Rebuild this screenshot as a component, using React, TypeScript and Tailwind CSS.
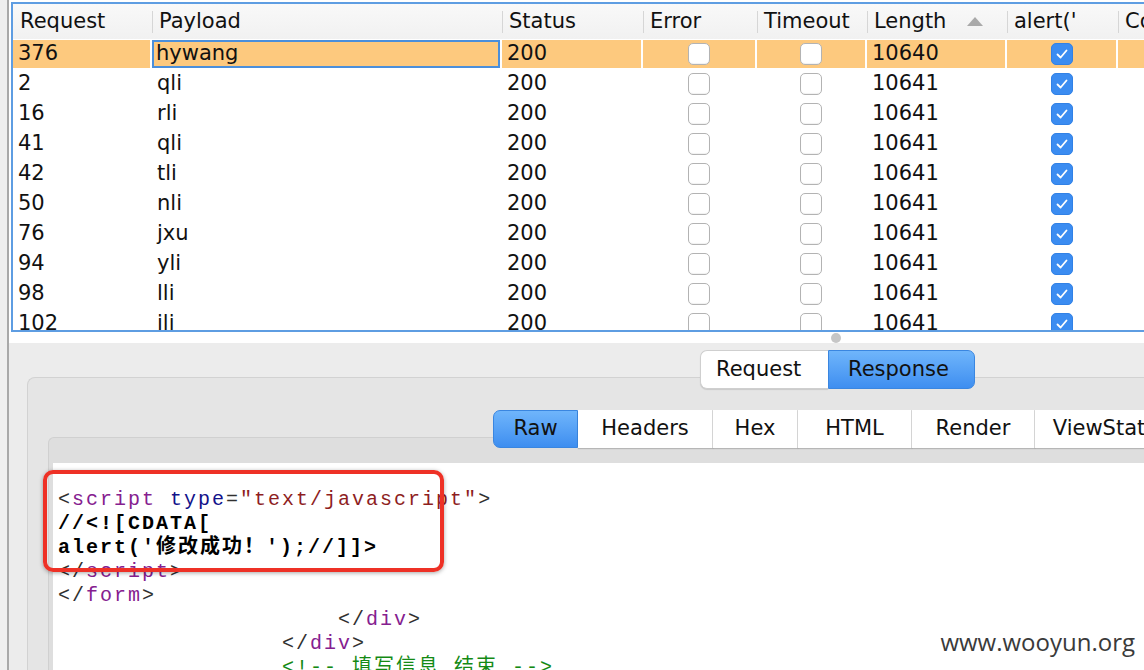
const cols = [
  { label: "Request", w: "w-[139px]" },
  { label: "Payload", w: "w-[350px]" },
  { label: "Status", w: "w-[141px]" },
  { label: "Error", w: "w-[114px]" },
  { label: "Timeout", w: "w-[110px]" },
  { label: "Length", w: "w-[140px]" },
  { label: "alert('", w: "w-[111px]" },
  { label: "Comment", w: "w-[120px]" },
];

const rows = [
  ["376", "hywang", "10640"],
  ["2", "qli", "10641"],
  ["16", "rli", "10641"],
  ["41", "qli", "10641"],
  ["42", "tli", "10641"],
  ["50", "nli", "10641"],
  ["76", "jxu", "10641"],
  ["94", "yli", "10641"],
  ["98", "lli", "10641"],
  ["102", "jli", "10641"],
];

const tabs = [
  { label: "Raw", w: "w-[85px]", active: true },
  { label: "Headers", w: "w-[135px]" },
  { label: "Hex", w: "w-[85px]" },
  { label: "HTML", w: "w-[114px]" },
  { label: "Render", w: "w-[123px]" },
  { label: "ViewState", w: "w-[142px]" },
];

const Check = ({ on }: { on?: boolean }) =>
  on ? (
    <div className="w-[22px] h-[22px] rounded-[5px] bg-[#3b8cf1] border border-[#3181e6] flex items-center justify-center">
      <svg width="14" height="14" viewBox="0 0 14 14">
        <path d="M2.5 7.5 L5.6 10.5 L11.5 3.5" fill="none" stroke="white" strokeWidth="1.8" strokeLinecap="round" strokeLinejoin="round" />
      </svg>
    </div>
  ) : (
    <div className="w-[22px] h-[22px] rounded-[5px] bg-white border border-[#b3b3b3] shadow-[inset_0_-1px_1px_rgba(0,0,0,0.06)]" />
  );

const Cell = ({ w, sel, children, center, focus }: any) => (
  <div className={`${w} h-full shrink-0 pr-[2px] py-[1px]`}>
    <div
      className={`h-full flex items-center ${center ? "justify-center" : focus ? "pl-[2px]" : "pl-[5px]"} ${
        sel ? "bg-[#fdc97e]" : ""
      } ${focus ? "border-2 border-[#4b8fdb]" : ""}`}
    >
      {children}
    </div>
  </div>
);

const P = ({ c }: { c: string }) => <span className="text-[#85208f]">{c}</span>;
const T = ({ c }: { c: string }) => <span className="text-[#303030]">{c}</span>;

const App = () => {
  return (
    <div className="relative w-[1144px] h-[670px] overflow-hidden bg-[#ececec] flex font-['DejaVu_Sans',sans-serif] text-[#111]">
      <div className="w-[7px] shrink-0 bg-[#efefef]" />
      <div className="w-[2px] shrink-0 bg-[#a9a9a9]" />

      <div className="flex-1 min-w-0 flex flex-col">
        {/* intruder results table */}
        <div className="bg-white pl-[2px] pt-[2px] pb-[11px]">
          <div className="h-[330px] border-2 border-r-0 border-[#5e9de2] overflow-hidden">
            <div className="h-[35px] flex bg-gradient-to-b from-[#f9f9f9] to-[#f1f1f1] text-[21px] whitespace-nowrap">
              {cols.map((c, i) => (
                <div key={c.label} className={`${c.w} shrink-0 h-full flex items-center relative pl-[7px] ${i === 5 ? "justify-between pr-[24px]" : ""}`}>
                  {i > 0 && <div className="absolute left-0 top-[7px] h-[22px] w-[1px] bg-[#d6d6d6]" />}
                  <span>{c.label}</span>
                  {i === 5 && (
                    <svg width="16" height="9" viewBox="0 0 16 9">
                      <polygon points="8,0 16,9 0,9" fill="#a9a9a9" />
                    </svg>
                  )}
                </div>
              ))}
            </div>
            {rows.map((r, i) => {
              const sel = i === 0;
              return (
                <div key={i} className="h-[30px] flex text-[21px] whitespace-nowrap">
                  <Cell w={cols[0].w} sel={sel}>{r[0]}</Cell>
                  <Cell w={cols[1].w} sel={sel} focus={sel}>{r[1]}</Cell>
                  <Cell w={cols[2].w} sel={sel}>200</Cell>
                  <Cell w={cols[3].w} sel={sel} center><Check /></Cell>
                  <Cell w={cols[4].w} sel={sel} center><Check /></Cell>
                  <Cell w={cols[5].w} sel={sel}>{r[2]}</Cell>
                  <Cell w={cols[6].w} sel={sel} center><Check on /></Cell>
                  <Cell w={cols[7].w} sel={sel}>{""}</Cell>
                </div>
              );
            })}
          </div>
        </div>

        {/* message viewer */}
        <div className="flex-1 flex flex-col pt-[7px] pl-[18px]">
          <div className="relative z-10 h-[39px] -mb-[12px] pl-[673px] flex text-[21px]">
            <div className="w-[128px] h-full bg-white border border-[#cfcfcf] border-r-0 rounded-l-[7px] flex items-center pl-[15px] shadow-[0_1px_1px_rgba(0,0,0,0.12)]">
              Request
            </div>
            <div className="w-[147px] h-full bg-gradient-to-b from-[#6fb5fb] to-[#3e8ef0] border border-[#3a86e0] rounded-r-[7px] flex items-center pl-[19px]">
              Response
            </div>
          </div>

          <div className="flex-1 bg-[#e5e5e5] border-t border-l border-[#d2d2d2] rounded-tl-[8px] flex flex-col pt-[32px] pl-[20px]">
            <div className="relative z-10 h-[38px] -mb-[11px] pl-[445px] flex text-[21px] whitespace-nowrap">
              {tabs.map((t) => (
                <div
                  key={t.label}
                  className={`${t.w} shrink-0 h-full flex items-center justify-center ${
                    t.active
                      ? "bg-gradient-to-b from-[#6fb5fb] to-[#3e8ef0] border border-[#3a86e0] rounded-l-[7px]"
                      : "bg-white border-r border-[#dadada] shadow-[0_1px_1px_rgba(0,0,0,0.18)]"
                  }`}
                >
                  {t.label}
                </div>
              ))}
            </div>

            <div className="flex-1 bg-[#dedede] border-t border-l border-[#d0d0d0] rounded-tl-[6px] pt-[25px] pl-[4px] flex">
              <div className="flex-1 bg-white pt-[25px] pl-[5px] font-['Liberation_Mono','Noto_Sans_CJK_SC',monospace] text-[20px] leading-[24px] tracking-[2px] whitespace-pre text-[#202020]">
                <div>
                  <T c="<" /><P c="script" /> <span className="text-[#12128a]">type</span>
                  <T c="=" />
                  <span className="text-[#8e1e1e]">"text/javascript"</span>
                  <T c=">" />
                </div>
                <div className="font-bold text-black">{"//<![CDATA["}</div>
                <div className="font-bold text-black">{"alert('修改成功！');//]]>"}</div>
                <div>
                  <T c="</" /><P c="script" /><T c=">" />
                </div>
                <div>
                  <T c="</" /><P c="form" /><T c=">" />
                </div>
                <div>
                  {"                    "}
                  <T c="</" /><P c="div" /><T c=">" />
                </div>
                <div>
                  {"                "}
                  <T c="</" /><P c="div" /><T c=">" />
                </div>
                <div className="text-[#148a14]">{"                <!-- 填写信息 结束 -->"}</div>
              </div>
            </div>
          </div>
        </div>
      </div>

      {/* splitter handle */}
      <div className="absolute left-[831px] top-[333px] w-[10px] h-[10px] rounded-full bg-[#c6c6c6]" />

      {/* annotation */}
      <div className="absolute left-[43px] top-[470px] w-[401px] h-[102px] border-[4px] border-[#ee3126] rounded-[10px] shadow-[0_1px_4px_rgba(0,0,0,0.35)]" />

      <div className="absolute right-[9px] top-[624px] font-['Open_Sans',sans-serif] text-[24px] text-[#3a3a3a]">
        www.wooyun.org
      </div>
    </div>
  );
};

export default App;
